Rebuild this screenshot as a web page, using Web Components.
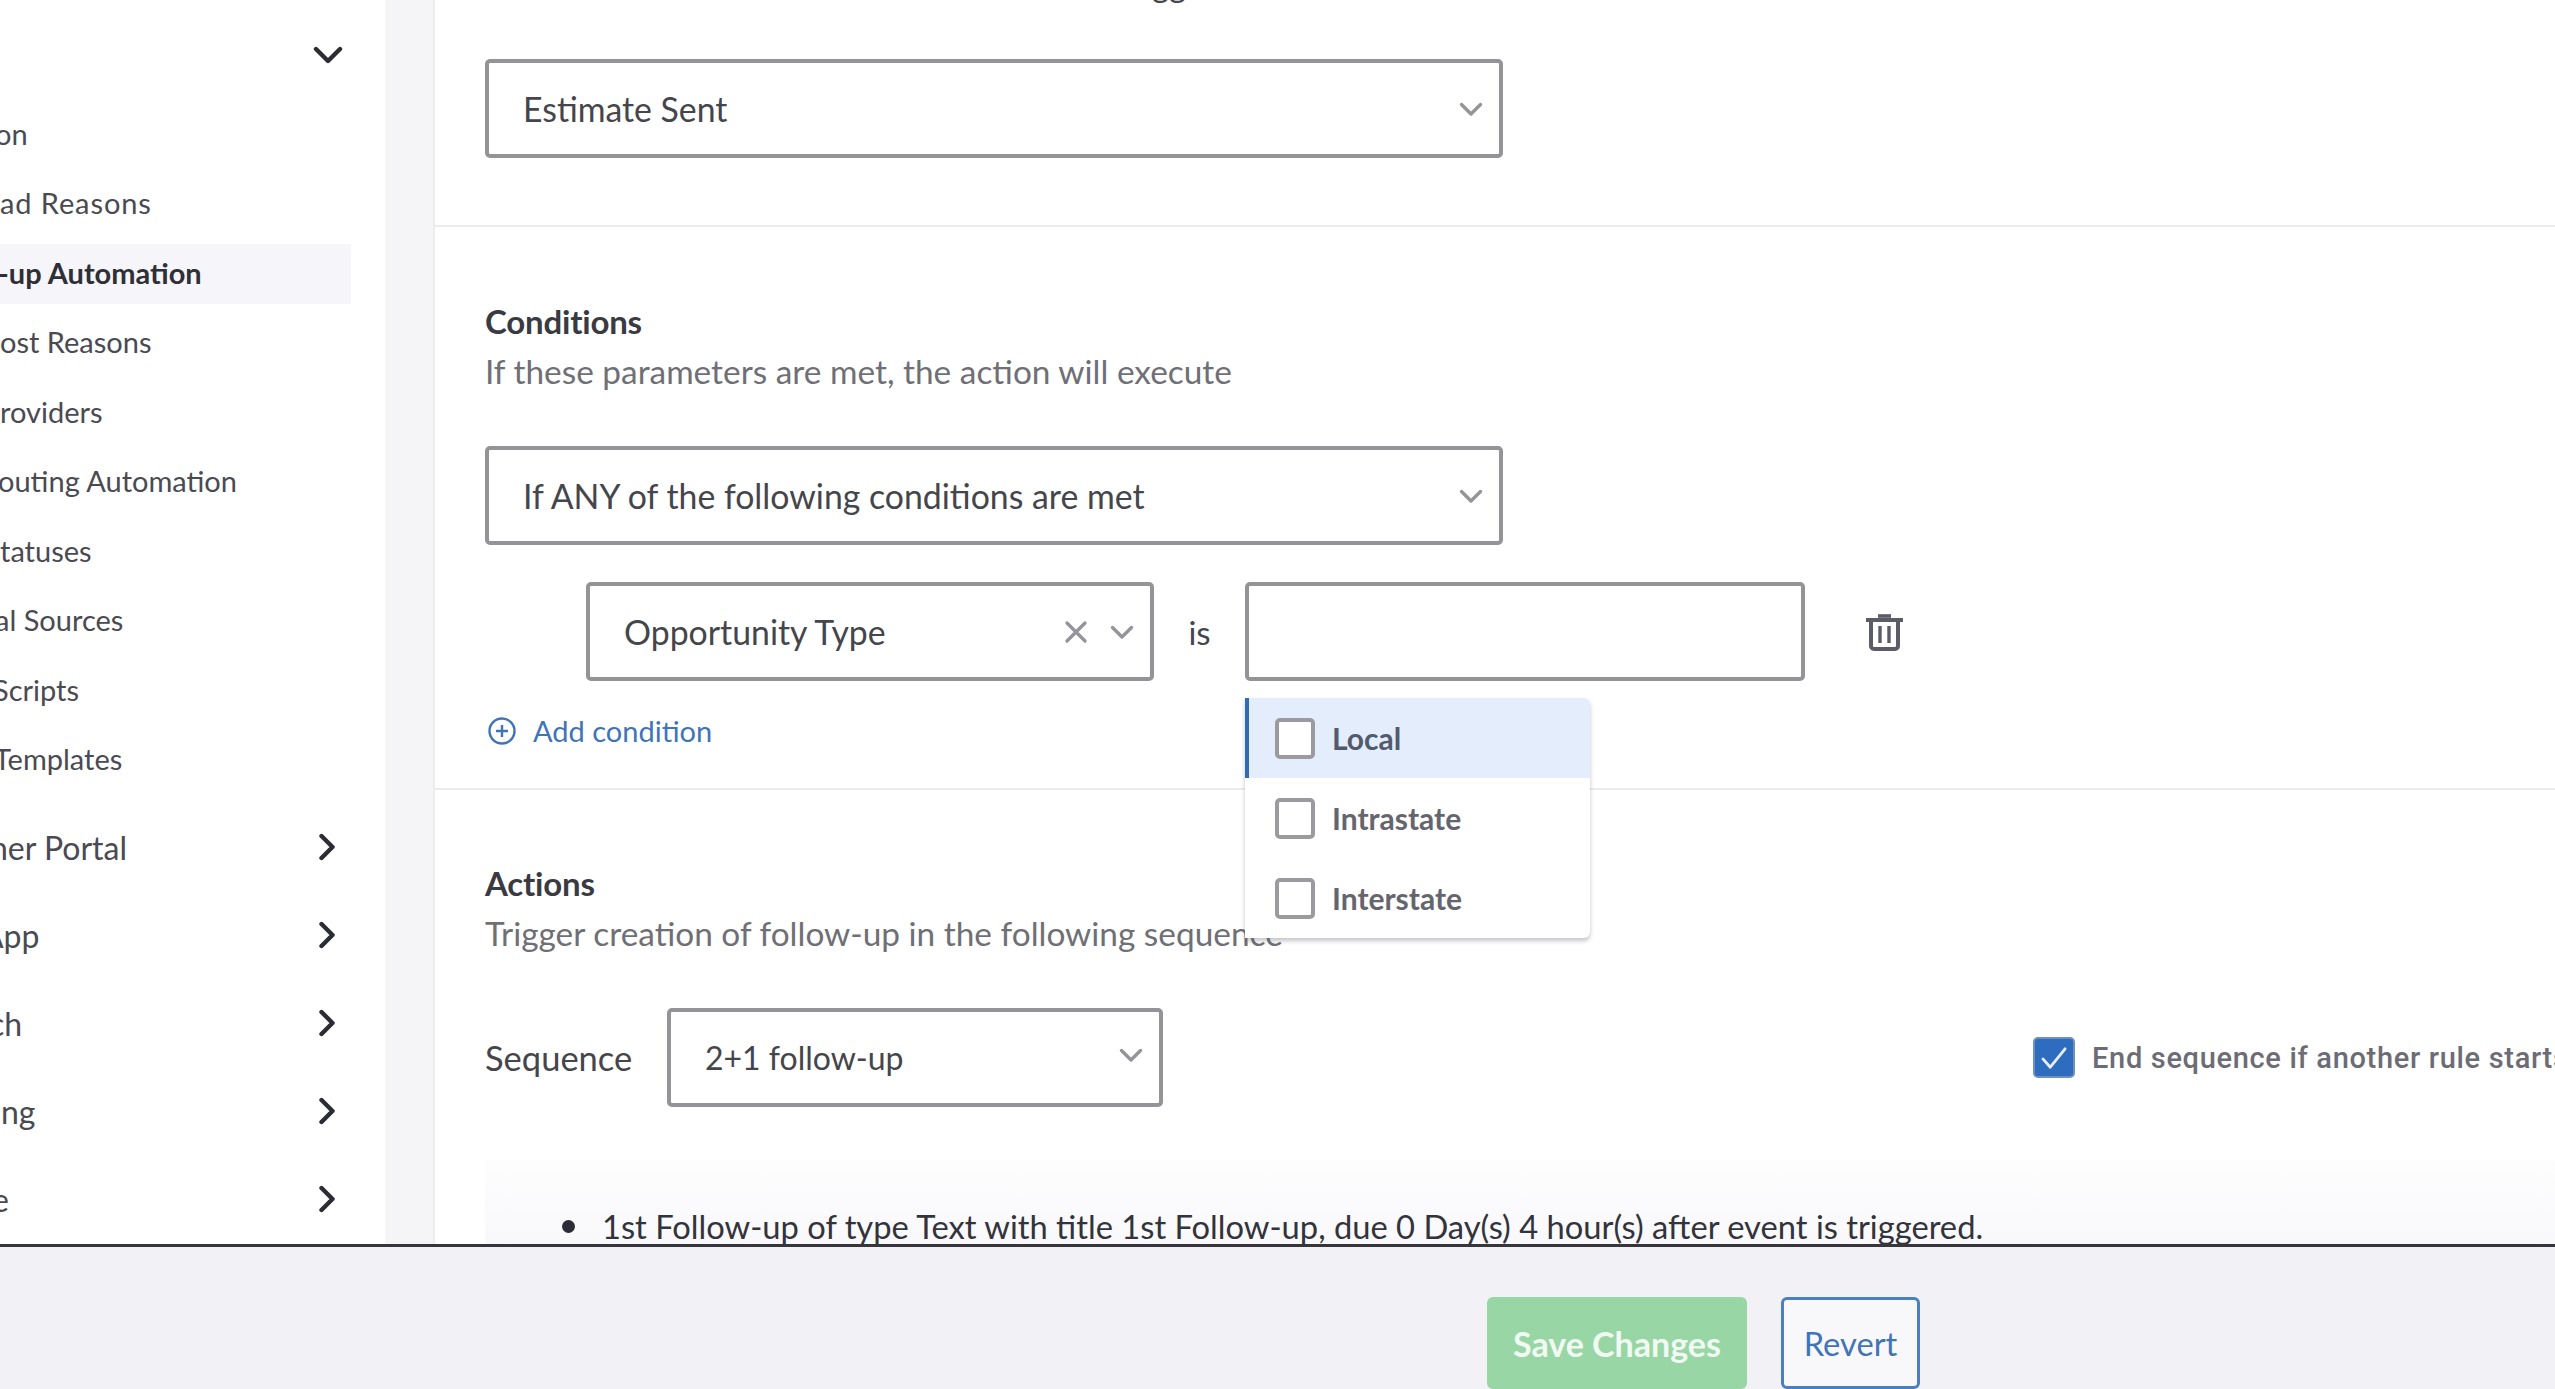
<!DOCTYPE html>
<html>
<head>
<meta charset="utf-8">
<title>Follow-up Automation</title>
<style>
  html, body { margin: 0; height: 100%; overflow: hidden; background: #fff; }
  body { font-family: "Lato", "Liberation Sans", sans-serif; color: #3b3b42; }
</style>
</head>
<body>
<app-shell>
  <side-nav slot="nav">
    <nav-head></nav-head>
    <nav-item shift="-5">on</nav-item>
    <nav-item style="letter-spacing:.9px">ad Reasons</nav-item>
    <nav-item active shift="-2">-up Automation</nav-item>
    <nav-item>ost Reasons</nav-item>
    <nav-item>roviders</nav-item>
    <nav-item shift="-2">outing Automation</nav-item>
    <nav-item>tatuses</nav-item>
    <nav-item shift="-5">al Sources</nav-item>
    <nav-item shift="-7">Scripts</nav-item>
    <nav-item shift="-6">Templates</nav-item>
    <nav-group first shift="-10">ner Portal</nav-group>
    <nav-group shift="-18">App</nav-group>
    <nav-group shift="-11">ch</nav-group>
    <nav-group shift="1">ng</nav-group>
    <nav-group shift="-8">e</nav-group>
  </side-nav>

  <rule-form slot="main"></rule-form>

  <save-bar slot="foot"></save-bar>
</app-shell>

<script>
// chevrons shared by the selects and the nav
const CHEV = `<svg class="chev" viewBox="0 0 24 16" width="24" height="16" fill="none" stroke="#94949a" stroke-width="3.4" stroke-linecap="round" stroke-linejoin="round"><path d="M2.500 3.500l9.500 9.500 9.500-9.500"/></svg>`;
const NAV_RIGHT = `<svg viewBox="0 0 20 28" width="20" height="28" fill="none" stroke="#2c2c34" stroke-width="4.4" stroke-linecap="round" stroke-linejoin="round"><path d="M3.500 3l11 11-11 11"/></svg>`;
const NAV_DOWN = `<svg viewBox="0 0 30 20" width="30" height="20" fill="none" stroke="#2c2c34" stroke-width="4.4" stroke-linecap="round" stroke-linejoin="round"><path d="M3 4l12 12L27 4"/></svg>`;

class AppShell extends HTMLElement {
  constructor() {
    super();
    this.attachShadow({ mode: "open" }).innerHTML = `
      <style>
        :host { display: flex; flex-direction: column; height: 1389px; width: 2555px; overflow: hidden; }
        .top { display: flex; height: 1244px; flex: none; overflow: hidden; }
        .gap { flex: none; width: 50px; box-sizing: border-box; background: #f5f5f8; border-right: 2px solid #ececf1; }
        ::slotted([slot=main]) { flex: 1; min-width: 0; }
      </style>
      <div class="top"><slot name="nav"></slot><div class="gap"></div><slot name="main"></slot></div>
      <slot name="foot"></slot>`;
  }
}

class SideNav extends HTMLElement {
  constructor() {
    super();
    this.attachShadow({ mode: "open" }).innerHTML = `
      <style>
        :host { display: block; flex: none; width: 385px; padding-top: 12px; box-sizing: border-box; overflow: hidden; background: #fff; }
      </style>
      <slot></slot>`;
  }
}

class NavHead extends HTMLElement {
  constructor() {
    super();
    this.attachShadow({ mode: "open" }).innerHTML = `
      <style>
        :host { display: flex; height: 86px; width: 343px; justify-content: flex-end; align-items: center; padding-bottom: 2px; box-sizing: content-box; }
      </style>${NAV_DOWN}`;
  }
}

class NavItem extends HTMLElement {
  constructor() {
    super();
    this.attachShadow({ mode: "open" }).innerHTML = `
      <style>
        :host { display: block; height: 69.500px; width: 351px; padding: 4.700px 0; box-sizing: border-box; font-size: 29px; color: #4a4a52; }
        :host([active]) .row { background: #f6f6fa; font-weight: 700; color: #2f2f37; }
        .row { height: 60px; line-height: 58px; white-space: nowrap; overflow: hidden; }
        span { display: inline-block; }
      </style>
      <div class="row"><span><slot></slot></span></div>`;
    const s = this.getAttribute("shift");
    if (s) this.shadowRoot.querySelector("span").style.marginLeft = s + "px";
  }
}

class NavGroup extends HTMLElement {
  constructor() {
    super();
    this.attachShadow({ mode: "open" }).innerHTML = `
      <style>
        :host { display: flex; height: 88px; width: 338px; align-items: center; justify-content: space-between; font-size: 32px; color: #4a4a52; overflow: hidden; }
        :host([first]) { margin-top: 8px; }
        span { white-space: nowrap; }
      </style>
      <span><slot></slot></span>${NAV_RIGHT}`;
    const s = this.getAttribute("shift");
    if (s) this.shadowRoot.querySelector("span").style.marginLeft = s + "px";
  }
}

class FormSelect extends HTMLElement {
  constructor() {
    super();
    this.attachShadow({ mode: "open" }).innerHTML = `
      <style>
        :host { display: flex; box-sizing: border-box; height: 99px; align-items: center; padding: 0 16px 0 34px; background: #fff; border: 4px solid #939398; border-radius: 5px; font-size: 33.800px; color: #45454c; }
        .t { flex: 1; white-space: nowrap; }
        .x { margin-right: 22px; display: flex; }
        .chev { transform: translateY(var(--chev-y, 0)); }
      </style>
      <span class="t"><slot></slot></span>
      ${this.hasAttribute("clear") ? `<span class="x"><svg viewBox="0 0 24 24" width="24" height="24" fill="none" stroke="#94949a" stroke-width="3.400" stroke-linecap="round"><path d="M3 3l18 18M21 3L3 21"/></svg></span>` : ""}
      ${CHEV}`;
  }
}

class FormCheck extends HTMLElement {
  constructor() {
    super();
    this.attachShadow({ mode: "open" }).innerHTML = `
      <style>
        :host { display: flex; align-items: center; gap: 17px; white-space: nowrap; font-family: "Roboto", sans-serif; font-weight: 500; font-size: 29px; letter-spacing: .68px; color: #6c6c76; }
        .b { flex: none; width: 42px; height: 41px; box-sizing: border-box; border-radius: 5px; background: #2e6cc0; border: 2px solid #6f8fbc; display: flex; align-items: center; justify-content: center; }
      </style>
      <span class="b"><svg viewBox="0 0 30 26" width="28" height="24" fill="none" stroke="#e8effa" stroke-width="3" stroke-linecap="round" stroke-linejoin="round"><path d="M3 14l8 9L27 3"/></svg></span>
      <span><slot></slot></span>`;
  }
}

class OptionList extends HTMLElement {
  constructor() {
    super();
    this.attachShadow({ mode: "open" }).innerHTML = `
      <style>
        :host { display: block; position: absolute; left: 810px; top: 698px; width: 345px; background: #fff; border-radius: 0 6px 6px 0; box-shadow: 0 3px 4px rgba(90,90,100,.35); font-weight: 700; font-size: 30px; color: #65656e; }
        .o { display: flex; align-items: center; gap: 17px; height: 80px; padding-left: 30px; box-sizing: border-box; }
        .o.on { background: #e3edfb; border-left: 4px solid #2e6cb8; padding-left: 26px; border-radius: 0 6px 0 0; color: #525b6e; }
        i { flex: none; width: 40px; height: 41px; box-sizing: border-box; background: #fff; border: 4px solid #9a9a9f; border-radius: 5px; }
      </style>
      <div class="o on"><i></i>Local</div>
      <div class="o"><i></i>Intrastate</div>
      <div class="o"><i></i>Interstate</div>`;
  }
}

class RuleForm extends HTMLElement {
  constructor() {
    super();
    this.attachShadow({ mode: "open" }).innerHTML = `
      <style>
        :host { display: block; position: relative; overflow: hidden; background: #fff; }
        section { padding: 0 0 0 50px; border-bottom: 2px solid #ebebf0; box-sizing: border-box; }
        .s1 { height: 227px; padding-top: 59px; }
        .s2 { height: 563px; padding-top: 75px; }
        .s3 { border: 0; padding-top: 74px; }
        .clip { position: absolute; left: 717px; top: -35px; font-size: 33px; line-height: 38px; color: #45454c; }
        h3 { margin: 0; font-size: 33px; line-height: 38px; font-weight: 700; color: #3a3a42; letter-spacing: -.2px; }
        p { margin: 11px 0 0; font-size: 33.400px; line-height: 40px; color: #6f6f76; white-space: nowrap; }
        .w { width: 1018px; }
        .s2 .w { margin-top: 55px; }
        .cond { display: flex; align-items: center; margin: 37px 0 0 101px; }
        .cond form-select { flex: none; width: 568px; }
        .is { width: 91px; text-align: center; font-size: 33px; color: #45454c; }
        .val { flex: none; width: 560px; height: 99px; box-sizing: border-box; border: 4px solid #939398; border-radius: 5px; }
        .del { margin-left: 61px; display: flex; }
        .add { display: flex; align-items: center; gap: 17px; margin: 32px 0 0 3px; font-size: 29px; color: #3f75b8; }
        .seq { display: flex; align-items: center; margin-top: 55px; height: 99px; }
        .seq label { flex: none; width: 182px; font-size: 34.500px; color: #45454c; }
        .seq form-select { flex: none; width: 496px; font-size: 32px; --chev-y: -3px; }
        form-check { flex: none; margin-left: 870px; }
        .steps { margin-top: 53px; height: 100px; padding: 47px 0 0 77px; background: linear-gradient(#fdfdfe, #f8f8fb); font-size: 32.700px; color: #33333b; white-space: nowrap; display: flex; gap: 27px; box-sizing: border-box; }
        .dot { flex: none; width: 13px; height: 13px; margin-top: 13px; border-radius: 50%; background: #2c2c34; }
      </style>
      <span class="clip">gg</span>
      <section class="s1">
        <form-select class="w">Estimate Sent</form-select>
      </section>
      <section class="s2">
        <h3>Conditions</h3>
        <p>If these parameters are met, the action will execute</p>
        <form-select class="w">If ANY of the following conditions are met</form-select>
        <div class="cond">
          <form-select clear>Opportunity Type</form-select>
          <span class="is">is</span>
          <div class="val"></div>
          <span class="del"><svg viewBox="0 0 37 38" width="37" height="38" fill="none" stroke="#5c5c68"><path d="M0 7h37" stroke-width="4"/><path d="M12 3h13" stroke-width="3.600"/><path d="M5 7v26a3 3 0 0 0 3 3h21a3 3 0 0 0 3-3V7" stroke-width="4"/><path d="M14 13v17M23 13v17" stroke-width="3.400"/></svg></span>
        </div>
        <div class="add">
          <svg viewBox="0 0 28 28" width="28" height="28" fill="none" stroke="#3f75b8" stroke-width="2.400"><circle cx="14" cy="14" r="12.500"/><path d="M14 8v12M8 14h12"/></svg>
          Add condition
        </div>
      </section>
      <section class="s3">
        <h3>Actions</h3>
        <p>Trigger creation of follow-up in the following sequence</p>
        <div class="seq">
          <label>Sequence</label>
          <form-select>2+1 follow-up</form-select>
          <form-check>End sequence if another rule starts</form-check>
        </div>
        <div class="steps"><span class="dot"></span><span>1st Follow-up of type Text with title 1st Follow-up, due 0 Day(s) 4 hour(s) after event is triggered.</span></div>
      </section>
      <option-list></option-list>`;
  }
}

class SaveBar extends HTMLElement {
  constructor() {
    super();
    this.attachShadow({ mode: "open" }).innerHTML = `
      <style>
        :host { display: flex; box-sizing: border-box; flex: 1; border-top: 3px solid #36363c; background: #f2f1f5; padding: 50px 0 0 1487px; gap: 34px; overflow: hidden; font-size: 32.700px; }
        button { font: inherit; height: 92px; box-sizing: border-box; border-radius: 6px; padding: 0; }
        .save { width: 260px; background: #99d6a5; border: 0; color: #f1faf2; font-weight: 700; font-size: 34px; }
        .rev { width: 139px; background: #f8f8fb; border: 3px solid #4a7fc0; color: #3f75b8; }
      </style>
      <button class="save">Save Changes</button>
      <button class="rev">Revert</button>`;
  }
}

customElements.define("app-shell", AppShell);
customElements.define("side-nav", SideNav);
customElements.define("nav-head", NavHead);
customElements.define("nav-item", NavItem);
customElements.define("nav-group", NavGroup);
customElements.define("form-select", FormSelect);
customElements.define("form-check", FormCheck);
customElements.define("option-list", OptionList);
customElements.define("rule-form", RuleForm);
customElements.define("save-bar", SaveBar);
</script>
</body>
</html>
